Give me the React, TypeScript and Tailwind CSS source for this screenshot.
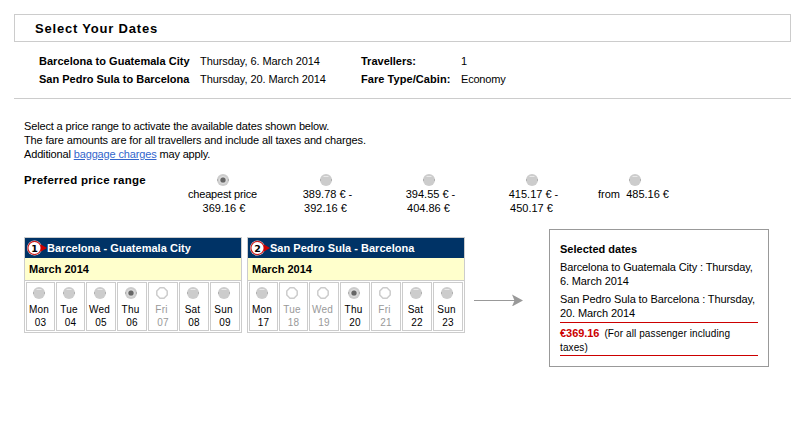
import clsx from 'clsx';

type RadioState = 'on' | 'off' | 'disabled';

interface Day {
  name: string;
  date: string;
  state: RadioState;
}

interface CalendarProps {
  step: number;
  title: string;
  month: string;
  days: Day[];
}

const PRICE_RANGES = [
  { lines: ['cheapest price', '369.16 €'], selected: true },
  { lines: ['389.78 € -', '392.16 €'], selected: false },
  { lines: ['394.55 € -', '404.86 €'], selected: false },
  { lines: ['415.17 € -', '450.17 €'], selected: false },
  { lines: ['from\u00a0 485.16 €'], selected: false },
];

const OUTBOUND: Day[] = [
  { name: 'Mon', date: '03', state: 'off' },
  { name: 'Tue', date: '04', state: 'off' },
  { name: 'Wed', date: '05', state: 'off' },
  { name: 'Thu', date: '06', state: 'on' },
  { name: 'Fri', date: '07', state: 'disabled' },
  { name: 'Sat', date: '08', state: 'off' },
  { name: 'Sun', date: '09', state: 'off' },
];

const INBOUND: Day[] = [
  { name: 'Mon', date: '17', state: 'off' },
  { name: 'Tue', date: '18', state: 'disabled' },
  { name: 'Wed', date: '19', state: 'disabled' },
  { name: 'Thu', date: '20', state: 'on' },
  { name: 'Fri', date: '21', state: 'disabled' },
  { name: 'Sat', date: '22', state: 'off' },
  { name: 'Sun', date: '23', state: 'off' },
];

function Radio({ state }: { state: RadioState }) {
  return (
    <svg className="block h-3 w-3 shrink-0" viewBox="0 0 12 12">
      {state === 'disabled' ? (
        <path
          d="M4 .8h4L11.2 4v4L8 11.2H4L.8 8V4z"
          fill="#fff"
          stroke="#ccc"
          strokeWidth="1.5"
          strokeLinejoin="round"
        />
      ) : (
        <>
          <circle cx="6" cy="6" r="6" fill="#ccc" />
          {state === 'off' && <path d="M3.5 2.5h5" stroke="#efefef" strokeWidth="0.8" />}
          <path d="M.5 5v2M11.5 5v2" stroke="#aaa" strokeWidth="0.8" />
        </>
      )}
      {state === 'on' && (
        <>
          <circle cx="6" cy="6" r="3.6" fill="none" stroke="#dedede" strokeWidth="1" />
          <circle cx="6" cy="6" r="2.6" fill="#666" />
        </>
      )}
    </svg>
  );
}

function StepBadge({ step }: { step: number }) {
  return (
    <svg className="block h-4 w-5 shrink-0" viewBox="0 0 20 16">
      <circle cx="7.5" cy="8" r="7.5" fill="#fff" />
      <circle cx="7.5" cy="8" r="6.6" fill="none" stroke="#c81e1e" strokeWidth="1.2" />
      <path d="M14 4.5l6 3.5-6 3.5z" fill="#c00" />
      <text
        x="7.5"
        y="11.5"
        textAnchor="middle"
        fontFamily="DejaVu Sans, sans-serif"
        fontSize="9.5"
        fontWeight="bold"
      >
        {step}
      </text>
    </svg>
  );
}

function Calendar({ step, title, month, days }: CalendarProps) {
  return (
    <div className="h-24 w-[218px] border border-[#ccc]">
      <div className="flex h-5 items-center bg-[#036] pl-[2px] font-bold tracking-[0.03px] whitespace-nowrap text-white">
        <StepBadge step={step} />
        {title}
      </div>
      <div className="h-[23px] border-b border-[#ccc] bg-[#ffc] pl-1 font-bold leading-[22px]">{month}</div>
      <div className="grid grid-cols-[29px_29px_30px_30px_30px_30px_30px] gap-px p-px">
        {days.map((day) => (
          <div
            key={day.date}
            className={clsx(
              'flex h-[49px] min-w-0 flex-col items-center border border-[#ccc] pt-[4px] pr-[3px] text-[10px] leading-[13px]',
              day.state === 'disabled' && 'text-[#999]',
            )}
          >
            <Radio state={day.state} />
            <div className="mt-[4px] tracking-[0.2px]">{day.name}</div>
            <div className="pl-[3px] tracking-[0.2px]">{day.date}</div>
          </div>
        ))}
      </div>
    </div>
  );
}

export default function App() {
  return (
    <div className="h-[428px] w-[795px] overflow-hidden bg-white pt-[14px] pl-[14px] font-['Liberation_Sans',Arial,sans-serif] text-[11px] leading-[14px] text-black">
      <h1 className="h-7 w-[777px] border border-[#ccc] pl-5 text-[13px] leading-[27px] font-bold tracking-[0.8px]">
        Select Your Dates
      </h1>

      {/* Trip summary */}
      <div className="grid h-[57px] w-[777px] grid-cols-[161px_161px_100px_1fr] content-start border-b border-[#ccc] pt-[10px] pl-[25px] leading-[18px]">
        <b className="tracking-[0.03px]">Barcelona to Guatemala City</b>
        <span className="tracking-[-0.07px]">Thursday, 6. March 2014</span>
        <b>Travellers:</b>
        <span>1</span>
        <b>San Pedro Sula to Barcelona</b>
        <span className="tracking-[-0.07px]">Thursday, 20. March 2014</span>
        <b className="tracking-[0.06px]">Fare Type/Cabin:</b>
        <span className="tracking-[-0.2px]">Economy</span>
      </div>

      <div className="pt-5 pl-[10px]">
        <div className="tracking-[-0.15px]">
          <p>Select a price range to activate the available dates shown below.</p>
          <p className="tracking-[-0.14px]">The fare amounts are for all travellers and include all taxes and charges.</p>
          <p>
            Additional <a href="#" className="text-[#36c] underline">baggage charges</a> may apply.
          </p>
        </div>

        {/* Price ranges */}
        <div className="mt-[13px] flex">
          <b className="-mt-px w-[147px] text-[11.5px] tracking-[0.27px]">Preferred price range</b>
          {PRICE_RANGES.map((range) => (
            <div key={range.lines[0]} className="flex w-[103px] flex-col items-center">
              <Radio state={range.selected ? 'on' : 'off'} />
              <div className="mt-px text-center whitespace-nowrap">
                {range.lines.map((line) => (
                  <div
                    key={line}
                    className={clsx(
                      line.endsWith('-') && 'pl-1',
                      line.startsWith('cheapest') && 'tracking-[-0.18px]',
                      line.startsWith('369') && 'pl-[3px]',
                      line.startsWith('from') && 'pr-[2px]',
                    )}
                  >
                    {line}
                  </div>
                ))}
              </div>
            </div>
          ))}
        </div>

        {/* Calendars and selection */}
        <div className="mt-[14px] flex items-start">
          <div className="mt-2 flex gap-[5px]">
            <Calendar step={1} title="Barcelona - Guatemala City" month="March 2014" days={OUTBOUND} />
            <Calendar step={2} title="San Pedro Sula - Barcelona" month="March 2014" days={INBOUND} />
          </div>
          <svg className="mt-[65px] ml-[9px] h-3 w-[49px]" viewBox="0 0 49 12">
            <path d="M0 6.5h42" stroke="#999" />
            <path d="M38 0.5l11 6-11 6 2.5-6z" fill="#999" />
          </svg>
          <div className="ml-[26px] h-[138px] w-[220px] border border-[#999] px-[10px] pt-3">
            <b className="block">Selected dates</b>
            <p className="mt-1 tracking-[-0.13px]">Barcelona to Guatemala City : Thursday, 6. March 2014</p>
            <p className="mt-1 tracking-[-0.1px]">San Pedro Sula to Barcelona : Thursday, 20. March 2014</p>
            <div className="mt-[2px] border-y border-[#c00] pt-[3px] text-[10px] tracking-[0.1px]">
              <b className="mr-[5px] text-[11px] tracking-[-0.05px] text-[#c00]">€369.16</b>
              (For all passenger including
              <br />
              taxes)
            </div>
          </div>
        </div>
      </div>
    </div>
  );
}
